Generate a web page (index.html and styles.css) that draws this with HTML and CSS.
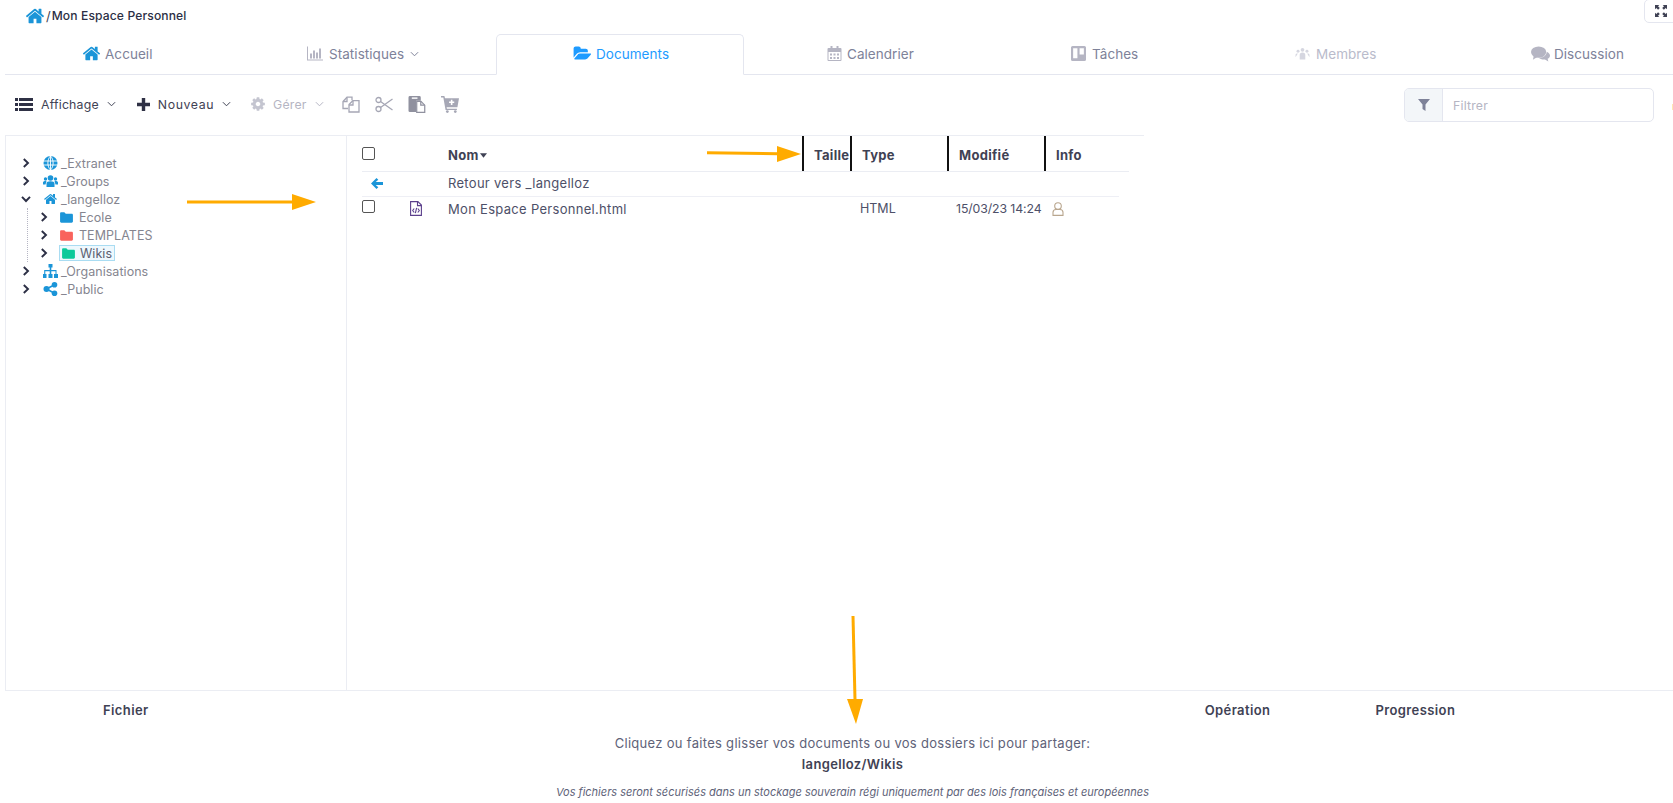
FILE: index.html
```html
<!DOCTYPE html>
<html lang="fr">
<head>
<meta charset="utf-8">
<title>Mon Espace Personnel</title>
<link rel="stylesheet" href="styles.css">
</head>
<body>
<svg class="defs" width="0" height="0" aria-hidden="true">
  <symbol id="home" viewBox="0 0 1792 1792"><path d="M1472 992v480q0 26-19 45t-45 19h-384v-384h-256v384h-384q-26 0-45-19t-19-45v-480q0-1 .5-3t.5-3l575-474 575 474q1 2 1 6zm223-69l-62 74q-8 9-21 11h-3q-13 0-21-7l-692-577-692 577q-12 8-24 7-13-2-21-11l-62-74q-8-10-7-23.5t11-21.5l719-599q32-26 76-26t76 26l244 204v-195q0-14 9-23t23-9h192q14 0 23 9t9 23v408l219 182q10 8 11 21.5t-7 23.5z"/></symbol>
  <symbol id="chev" viewBox="0 0 10 10"><path d="M2.800 1 7 5 2.800 9" fill="none" stroke="currentColor" stroke-width="1.900"/></symbol>
  <symbol id="chevd" viewBox="0 0 10 10"><path d="M1 2.800 5 7 9 2.800" fill="none" stroke="currentColor" stroke-width="1.900"/></symbol>
  <symbol id="caret" viewBox="0 0 10 6"><path d="M1 1 5 5 9 1" fill="none" stroke="currentColor" stroke-width="1.100"/></symbol>
  <symbol id="folder" viewBox="0 0 14 12"><path d="M0 1.600C0 .8.6.3 1.300.3h3.300l1.600 1.600h6.500c.7 0 1.300.5 1.300 1.200v7.300c0 .8-.6 1.300-1.300 1.300H1.300C.6 11.700 0 11.200 0 10.400z"/></symbol>
</svg>

<header class="crumb">
  <svg class="ic-crumb"><use href="#home"/></svg>
  <span class="crumb-sep">/</span>
  <span class="crumb-text">Mon Espace Personnel</span>
</header>
<button class="expand" aria-label="Plein écran">
  <svg viewBox="0 0 12 12" width="12" height="12"><path d="M0 0h4.300L3 1.300 4.800 3.100 3.100 4.800 1.300 3 0 4.300zM12 0v4.300L10.700 3 8.900 4.800 7.200 3.100 9 1.300 7.700 0zM0 12V7.700L1.300 9l1.800-1.800 1.700 1.700L3 10.700 4.300 12zM12 12H7.700L9 10.700 7.200 8.900 8.900 7.200 10.700 9 12 7.700z"/></svg>
</button>

<nav class="tabs">
  <a class="tab"><svg class="ic-home-tab"><use href="#home"/></svg>Accueil</a>
  <a class="tab">
    <svg class="ic-tab ic-stats" viewBox="0 0 16 14"><path d="M0 0h1v13h15v1H0z"/><path d="M3 7h2v5H3zM6 4h2v8H6zM9 6h2v6H9zM12 2h2v10h-2z"/></svg>Statistiques<svg class="ic-caret"><use href="#caret"/></svg>
  </a>
  <a class="tab tab-active">
    <svg class="ic-open" viewBox="0 0 2048 1792" fill="currentColor"><path d="M1943 952q0 31-31 66l-336 396q-43 51-120.500 86.500t-143.500 35.500h-1088q-34 0-60.500-13t-26.500-43q0-31 31-66l336-396q43-51 120.500-86.500t143.500-35.500h1088q34 0 60.500 13t26.500 43zm-343-344v160h-832q-94 0-197 47.500t-164 119.500l-337 396-5 6q0-4-.5-12.500t-.5-12.500v-960q0-92 66-158t158-66h320q92 0 158 66t66 158v32h544q92 0 158 66t66 158z"/></svg>Documents
  </a>
  <a class="tab tab-cal">
    <svg class="ic-tab" viewBox="0 0 14 15"><path fill-rule="evenodd" d="M3 0h2v2h4V0h2v2h2a1 1 0 0 1 1 1v11a1 1 0 0 1-1 1H1a1 1 0 0 1-1-1V3a1 1 0 0 1 1-1h2zM1 6v8h12V6zM2.500 7.500h2v2h-2zM6 7.500h2v2H6zM9.500 7.500h2v2h-2zM2.500 11h2v2h-2zM6 11h2v2H6zM9.500 11h2v2h-2z"/></svg>Calendrier
  </a>
  <a class="tab tab-task">
    <svg class="ic-tab" viewBox="0 0 14 14"><path fill-rule="evenodd" d="M1.500 0h11A1.500 1.500 0 0 1 14 1.500v11a1.500 1.500 0 0 1-1.500 1.500h-11A1.500 1.500 0 0 1 0 12.500v-11A1.500 1.500 0 0 1 1.500 0zM2 2v9.500h4V2zM8 2v6h4V2z"/></svg>Tâches
  </a>
  <a class="tab tab-off">
    <svg class="ic-tab" viewBox="0 0 16 14"><circle cx="8" cy="3" r="2"/><circle cx="3.200" cy="4.500" r="1.600"/><circle cx="12.800" cy="4.500" r="1.600"/><path d="M5 13.500V8.500C5 7 6 6 8 6s3 1 3 2.500v5zM.5 11V8.500C.5 7.500 1.500 7 3 7M15.500 11V8.500C15.500 7.500 14.500 7 13 7"/></svg>Membres
  </a>
  <a class="tab">
    <svg class="ic-talk" viewBox="0 0 20 16"><ellipse cx="8" cy="6" rx="8" ry="6"/><path d="M3 9.500 2 14l5-3z"/><path d="M16.500 5.500C18.700 6.500 20 8 20 9.500c0 1.500-1 2.800-2.500 3.600l.8 2.900-3.600-2.200c-2.500.3-5-.2-6.500-1.800 4.500 0 8.300-2.500 8.300-6.500z"/></svg>Discussion
  </a>
</nav>

<section class="toolbar">
  <button class="tool"><svg class="ic-list" viewBox="0 0 18 13"><path d="M0 0h3v3H0zM4 0h14v3H4zM0 5h3v3H0zM4 5h14v3H4zM0 10h3v3H0zM4 10h14v3H4z"/></svg>Affichage<svg class="ic-chevsm"><use href="#caret"/></svg></button>
  <button class="tool tool-new"><svg class="ic-plus" viewBox="0 0 13 13"><path d="M4.800 0h3.400v4.800H13v3.400H8.200V13H4.800V8.200H0V4.800h4.800z"/></svg>Nouveau<svg class="ic-chevsm"><use href="#caret"/></svg></button>
  <button class="tool tool-off"><svg class="ic-gear" viewBox="0 0 1792 1792"><path d="M1152 896q0-106-75-181t-181-75-181 75-75 181 75 181 181 75 181-75 75-181zm512-109v222q0 12-8 23t-20 13l-185 28q-19 54-39 91 35 50 107 138 10 12 10 25t-9 23q-27 37-99 108t-94 71q-12 0-26-9l-138-108q-44 23-91 38-16 136-29 186-7 28-36 28h-222q-14 0-24.500-8.500t-11.500-21.500l-28-184q-49-16-90-37l-141 107q-10 9-25 9-14 0-25-11-126-114-165-168-7-10-7-23 0-12 8-23 15-21 51-66.500t54-70.500q-27-50-41-99l-183-27q-13-2-21-12.500t-8-23.500v-222q0-12 8-23t19-13l186-28q14-46 39-92-40-57-107-138-10-12-10-24 0-10 9-23 26-36 98.500-107.500t94.500-71.500q13 0 26 10l138 107q44-23 91-38 16-136 29-186 7-28 36-28h222q14 0 24.500 8.500t11.500 21.500l28 184q49 16 90 37l142-107q9-9 24-9 13 0 25 10 129 119 165 170 7 8 7 22 0 12-8 23-15 21-51 66.500t-54 70.500q26 50 41 98l183 28q13 2 21 12.500t8 23.500z"/></svg>Gérer<svg class="ic-chevsm"><use href="#caret"/></svg></button>
  <div class="tool-icons">
    <svg class="ic-act" viewBox="0 0 18 17" fill="none" stroke="#a6a7b5" stroke-width="1.300"><path d="M6 12.500H1V5.500L5 1.200h5v3"/><path d="M5 1.500v4H1"/><path d="M7 16V8.500L10.800 4.700H17V16z"/><path d="M11 5v4H7"/></svg>
    <svg class="ic-act" viewBox="0 0 18 16" fill="none" stroke="#a6a7b5" stroke-width="1.300"><circle cx="3.500" cy="3.500" r="2.500"/><circle cx="3.500" cy="12.500" r="2.500"/><path d="M5.500 5 17.500 13.500M5.500 11 17.500 2.500"/></svg>
    <svg class="ic-act" viewBox="0 0 18 18"><path fill="#90919f" d="M1.500 0h10A1.500 1.500 0 0 1 13 1.500V5H8v12H1.500A1.500 1.500 0 0 1 0 15.500v-14A1.500 1.500 0 0 1 1.500 0z"/><path fill="#fff" d="M3.500 1.500h6V3h-6z"/><path fill="none" stroke="#90919f" stroke-width="1.300" d="M8.700 5.700h4.500l4 4v7.700H8.700z"/><path fill="none" stroke="#90919f" stroke-width="1.300" d="M13 5.700v4h4"/></svg>
    <svg class="ic-act" viewBox="0 0 17 16"><path fill="#a6a7b5" d="M0 0h3.200l.6 2H17l-1.500 8.500H5.300l.3 1.500H15v1.300H4.300L2.200 1.300H0z"/><circle cx="6" cy="14.700" r="1.300" fill="#a6a7b5"/><circle cx="13.500" cy="14.700" r="1.300" fill="#a6a7b5"/><path fill="#fff" d="M9.300 3.500h1.500v1.700h1.700v1.500h-1.700v1.700H9.300V6.700H7.600V5.200h1.700z"/></svg>
  </div>
  <div class="filter">
    <span class="filter-add"><svg viewBox="0 0 12 12" width="12" height="12"><path d="M0 0h12L7.500 5.500V12l-3-2V5.500z"/></svg></span>
    <span class="filter-input">Filtrer</span>
  </div>
  <span class="sliver"></span>
</section>

<main class="panes">
  <aside class="tree">
    <div class="node"><svg class="chev"><use href="#chev"/></svg><svg class="nic" viewBox="0 0 14 14"><circle cx="7" cy="7" r="7"/><path d="M0 5h14M0 9h14M7 0v14M7 0C3.500 3.500 3.500 10.500 7 14M7 0c3.500 3.500 3.500 10.500 0 14" fill="none" stroke="#fff" stroke-width=".9"/></svg><span>_Extranet</span></div>
    <div class="node"><svg class="chev"><use href="#chev"/></svg><svg class="nic" viewBox="0 0 15 12"><circle cx="7.500" cy="3" r="2.800"/><circle cx="2.500" cy="4" r="1.700"/><circle cx="12.500" cy="4" r="1.700"/><path d="M3.500 12V8.500C3.500 7 5 6.300 7.500 6.300s4 .7 4 2.200V12zM0 9.500v-2C0 6.500 1 6 2.700 6l.8.300L2.500 9.500zM15 9.500v-2C15 6.500 14 6 12.300 6l-.8.300 1 3.200z"/></svg><span>_Groups</span></div>
    <div class="node"><svg class="chev"><use href="#chevd"/></svg><svg class="nic"><use href="#home"/></svg><span>_langelloz</span></div>
    <div class="children">
      <div class="node"><svg class="chev"><use href="#chev"/></svg><svg class="fld fld-blue"><use href="#folder"/></svg><span>Ecole</span></div>
      <div class="node"><svg class="chev"><use href="#chev"/></svg><svg class="fld fld-red"><use href="#folder"/></svg><span>TEMPLATES</span></div>
      <div class="node"><svg class="chev"><use href="#chev"/></svg><span class="selected"><svg class="fld fld-green"><use href="#folder"/></svg><span>Wikis</span></span></div>
    </div>
    <div class="node"><svg class="chev"><use href="#chev"/></svg><svg class="nic" viewBox="0 0 15 14"><path d="M5.500 0h4v3.500h-1.200v2.500h5.200v4h1.500v4h-4v-4h1.500V7.200H8.300V10h1.200v4h-4v-4h1.200V7.200H2.300V10h1.200v4h-3.500v-4h1.200V6h5.500V3.500H5.500z"/></svg><span>_Organisations</span></div>
    <div class="node"><svg class="chev"><use href="#chev"/></svg><svg class="nic" viewBox="0 0 14 14"><circle cx="3" cy="7" r="3"/><circle cx="11" cy="2.800" r="2.800"/><circle cx="11" cy="11.200" r="2.800"/><path d="M3 7 11 2.800M3 7l8 4.200" stroke="#1b95d8" stroke-width="1.600"/></svg><span>_Public</span></div>
  </aside>

  <section class="list">
    <div class="row row-head">
      <span class="cell"><span class="check"></span></span>
      <span></span>
      <span class="th">Nom<svg class="sort" viewBox="0 0 8 5"><path d="M0 0h8L4 5z"/></svg></span>
      <span class="th th-line">Taille</span>
      <span class="th th-line">Type</span>
      <span class="th th-line">Modifié</span>
      <span class="th th-line">Info</span>
    </div>
    <div class="row row-body">
      <svg class="back" viewBox="0 0 12 11"><path d="M5.500 0 7.300 1.800 4.700 4H12v3H4.700l2.600 2.200L5.500 11 0 5.500z"/></svg>
      <span></span>
      <span class="td">Retour vers _langelloz</span>
    </div>
    <div class="row row-body row-file">
      <span class="cell-top"><span class="check"></span></span>
      <svg class="file" viewBox="0 0 12 15" fill="none" stroke="#5b3f8c" stroke-width="1.100"><path d="M.6.600h7.300l3.500 3.500v10.300H.6z"/><path d="M7.500.600v4h3.900"/><path d="M4.200 7.500 2.700 9.500l1.500 2M7.800 7.500l1.500 2-1.500 2M6.600 6.800 5.400 12.200"/></svg>
      <span class="td">Mon Espace Personnel.html</span>
      <span></span>
      <span class="td td-type">HTML</span>
      <span class="td td-date">15/03/23 14:24</span>
      <svg class="user" viewBox="0 0 12 14" fill="none" stroke="#b9a68e" stroke-width="1.100"><circle cx="6" cy="4" r="3.300"/><path d="M1 13.400V10.500c0-1.700 1.300-3 3-3h4c1.700 0 3 1.300 3 3v2.900z"/></svg>
    </div>
  </section>
</main>

<footer class="drop">
  <div class="drop-head">
    <span class="dh-file">Fichier</span>
    <span class="dh-op">Opération</span>
    <span class="dh-prog">Progression</span>
  </div>
  <div class="drop-body">
    <p class="drop-text">Cliquez ou faites glisser vos documents ou vos dossiers ici pour partager:</p>
    <p class="drop-path">langelloz/Wikis</p>
    <p class="drop-note">Vos fichiers seront sécurisés dans un stockage souverain régi uniquement par des lois françaises et européennes</p>
  </div>
</footer>

<svg class="notes" viewBox="0 0 1673 803" aria-hidden="true">
  <path d="M707 152.700 778 153.800" stroke="#ffab00" stroke-width="3" fill="none"/>
  <path d="M777 146 801 154 777 162z" fill="#ffab00"/>
  <path d="M187 202 293 202" stroke="#ffab00" stroke-width="3" fill="none"/>
  <path d="M292 194 316 202 292 210z" fill="#ffab00"/>
  <path d="M853 616 855 700" stroke="#ffab00" stroke-width="3" fill="none"/>
  <path d="M847 699 863 699 856 724z" fill="#ffab00"/>
</svg>
</body>
</html>
```

FILE: styles.css
```css
* { box-sizing: border-box; }
html, body { margin: 0; padding: 0; }
body {
  width: 1673px;
  height: 803px;
  overflow: hidden;
  position: relative;
  background: #fff;
  font-family: Inter, "Open Sans", sans-serif;
  font-size: 13px;
  color: #3f4254;
}
p { margin: 0; }
.defs { position: absolute; }
svg { display: block; flex: none; }

.crumb { height: 34px; display: flex; align-items: center; padding: 0 0 3px 25px; }
.ic-crumb { width: 20px; height: 20px; fill: #1b95d8; }
.crumb-sep { margin: 0 1px 0 1px; color: #3f4254; }
.crumb-text { color: #2c2f45; font-weight: 500; font-size: 12.100px; letter-spacing: .12px; }

.expand {
  position: absolute; top: -1px; right: -6px; width: 35px; height: 24px;
  background: #fff; border: 1px solid #e4e6ef; border-radius: 5px; padding: 0 0 0 10px;
  color: #3f4254;
}
.expand svg { fill: #3f4254; }

.tabs {
  margin-left: 5px; height: 41px;
  display: grid; grid-template-columns: 225px 266px 248px 250px 224px 236px 1fr;
  border-bottom: 1px solid #e4e6ef;
}
.tab {
  display: flex; align-items: center; padding: 0 0 2px 77px; color: #7e8299;
  font-size: 13.500px; letter-spacing: .05px;
}
.tab-cal { padding-left: 83px; }
.tab-off { color: #b9bbcb; }
.tab-off .ic-tab { width: 15px; height: 13px; fill: #d5d6e0; margin-right: 6px; }
.tab-task .ic-tab { margin-right: 6px; }
.tab-active {
  height: 41px; color: #1e9bff; background: #fff;
  border: 1px solid #e4e6ef; border-bottom: 1px solid #fff; border-radius: 5px 5px 0 0;
  padding-left: 76px;
}
.ic-home-tab { width: 19px; height: 19px; fill: #1b95d8; margin-right: 4px; }
.ic-tab { width: 15px; height: 15px; fill: #b5b5c3; margin-right: 5px; }
.ic-stats { width: 16px; margin-right: 6px; }
.ic-caret { width: 9px; height: 6px; margin-left: 6px; color: #7e8299; }
.ic-open { width: 19px; height: 17px; margin-right: 4px; }
.ic-talk { width: 19px; height: 16px; fill: #b5b5c3; margin-right: 4px; }

.toolbar { height: 60px; display: flex; align-items: center; padding-left: 15px; }
.tool {
  display: flex; align-items: center; padding: 0 0 2px; background: none; border: 0;
  font: inherit; color: #3f4254; font-size: 12.300px; letter-spacing: .2px; margin-right: 21px;
}
.tool-new { letter-spacing: .6px; margin-right: 19px; }
.tool-off { color: #b5b5c3; margin-right: 18px; }
.ic-list { width: 18px; height: 13px; fill: #2f3145; margin-right: 8px; }
.ic-plus { width: 13px; height: 13px; fill: #2f3145; margin-right: 8px; }
.ic-gear { width: 16px; height: 16px; fill: #c4c5d0; margin-right: 7px; }
.ic-chevsm { width: 9px; height: 6px; margin-left: 8px; color: currentColor; }
.tool-icons { display: flex; align-items: center; gap: 15px; padding-bottom: 2px; }
.ic-act { width: 18px; height: 17px; }
.filter {
  margin-left: auto; width: 250px; height: 34px; display: flex;
  border: 1px solid #e4e6ef; border-radius: 5px; overflow: hidden;
}
.filter-add {
  width: 38px; background: #f3f6f9; border-right: 1px solid #e4e6ef;
  display: flex; align-items: center; justify-content: center;
}
.filter-add svg { fill: #7e8299; }
.filter-input { padding-left: 10px; display: flex; align-items: center; color: #b5b5c3; font-size: 12.300px; letter-spacing: .2px; }
.sliver { width: 1px; height: 6px; margin: 4px 0 0 18px; background: #ffe7b3; }

.panes { margin-left: 5px; height: 555px; display: flex; }
.tree {
  width: 342px; border: solid #ebedf3; border-width: 1px 1px 0 1px; padding: 18px 0 0 15px;
}
.node {
  height: 18px; display: flex; align-items: center; color: #85858f; font-size: 12.500px; letter-spacing: .05px;
}
.chev { width: 10px; height: 10px; color: #2c2f45; margin-right: 12px; }
.nic { width: 15px; height: 14px; fill: #1b95d8; margin-right: 3px; }
.children { margin-left: 6px; border-left: 1px dotted #b5b5c3; padding-left: 11px; }
.children .chev { margin-right: 11px; }
.fld { width: 13px; height: 11px; margin-right: 6px; }
.fld-blue { fill: #1b95d8; }
.fld-red { fill: #f9635c; }
.fld-green { fill: #0bc99a; }
.selected {
  display: flex; align-items: center; width: 56px; height: 16px; margin-left: -1px; padding: 0 0 0 2px;
  background: #eef8fd; border: 1px solid #a9dcf2; color: #5b5e70;
}
.selected .fld { margin-right: 5px; }

.list { width: 797px; border-top: 1px solid #ebedf3; padding-left: 15px; }
.row {
  display: grid; grid-template-columns: 48px 38px 355px 48px 97px 97px 1fr;
  align-items: center;
}
.row-head { width: 767px; height: 36px; border-bottom: 1px solid #ebedf3; align-items: stretch; }
.row-body { width: 757px; height: 25px; border-bottom: 1px solid #eeeff5; padding-bottom: 2px; }
.row-file { border-bottom: 0; }
.cell { display: flex; align-items: flex-start; padding-top: 11px; }
.cell-top { display: flex; align-self: start; padding-top: 3px; }
.check { width: 13px; height: 13px; display: block; border: 1px solid #555; border-radius: 2px; background: #fff; }
.th {
  display: flex; align-items: center; font-weight: 700; color: #3f4254; font-size: 13px; padding-top: 3px; letter-spacing: .3px;
}
.th-line { border-left: 2px solid #111; padding-left: 10px; margin-left: -1px; }
.sort { width: 7px; height: 5px; fill: #3f4254; margin-left: 1px; }
.back { width: 12px; height: 11px; fill: #1b95d8; margin-left: 9px; }
.td { color: #4d5068; font-size: 13px; letter-spacing: .3px; white-space: nowrap; }
.td-type { padding-left: 9px; font-size: 12.500px; letter-spacing: 0; }
.td-date { padding-left: 8px; font-size: 12.300px; letter-spacing: -.1px; }
.file { width: 12px; height: 15px; align-self: center; }
.user { width: 12px; height: 14px; margin-left: 7px; }

.drop { height: 113px; margin-left: 5px; border-top: 1px solid #ebedf3; text-align: center; }
.drop-head { height: 40px; display: flex; align-items: center; padding-bottom: 2px; text-align: left; font-weight: 600; color: #3f4254; font-size: 13px; letter-spacing: .4px; }
.dh-file { margin-left: 98px; }
.dh-op { margin-left: 1056px; }
.dh-prog { margin-left: 105px; }
.drop-body { padding-left: 27px; }
.drop-text { color: #5e6278; font-size: 13px; letter-spacing: .3px; line-height: 22px; padding-top: 1px; }
.drop-path { color: #3f4254; font-weight: 600; font-size: 13px; letter-spacing: .35px; line-height: 20px; }
.drop-note { color: #5e6278; font-style: italic; font-size: 11px; letter-spacing: 0; line-height: 18px; padding-top: 9px; }

.notes { position: absolute; left: 0; top: 0; width: 1673px; height: 803px; pointer-events: none; }
```
